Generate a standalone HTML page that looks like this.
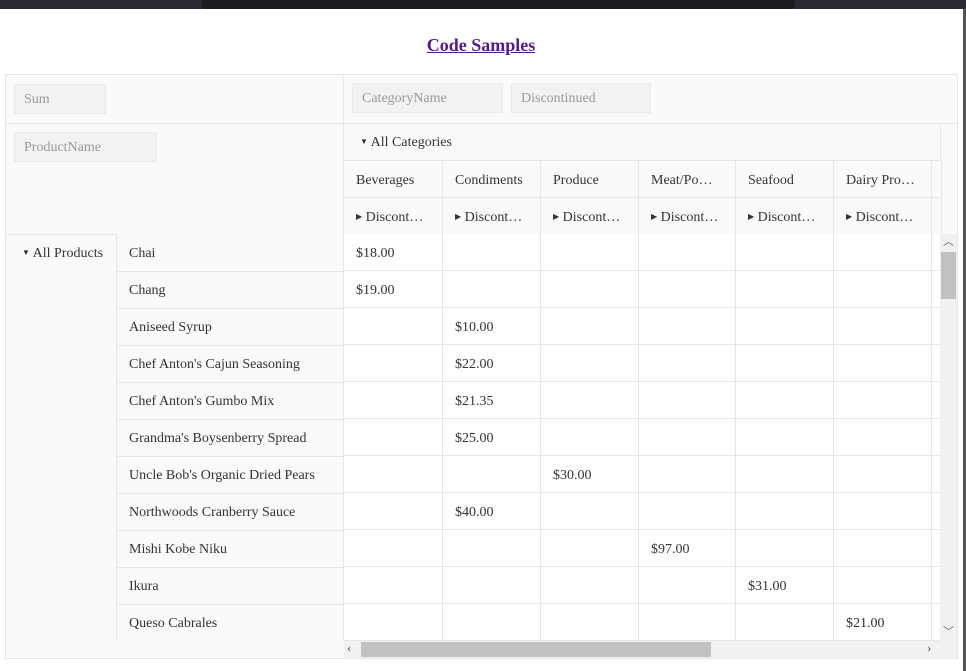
<!DOCTYPE html>
<html><head><meta charset="utf-8"><style>
*{box-sizing:border-box;margin:0;padding:0}
body{width:966px;height:671px;background:#fff;position:relative;overflow:hidden;font-family:"Liberation Serif",serif;font-size:14px;color:#333}
.a{position:absolute}
.top{left:0;top:0;width:966px;height:9px;background:#2b2a33}
.addr{left:202px;top:0;width:593px;height:9px;background:#1c1b22;border-radius:0 0 4px 4px}
.rb{left:963px;top:9px;width:3px;height:662px;background:#555}
h1{position:absolute;left:0;width:962px;top:35px;text-align:center;font-size:18px;font-weight:bold;color:#551a8b;text-decoration:underline}
.chip{position:absolute;height:30px;background:#f2f2f2;border:1px solid #eaeaea;color:#999;font-size:14px;line-height:30px;padding-left:9px}
.bdr{position:absolute;background:#e6e6e6}
table{border-collapse:collapse;position:absolute;table-layout:fixed}
td{border:1px solid #e6e6e6;height:37px;padding:3px 16px 0 12px;white-space:nowrap;overflow:hidden;text-overflow:ellipsis;font-size:14px}
.tri{font-size:8px;vertical-align:2px}
</style></head><body>
<div class="a top"></div><div class="a addr"></div><div class="a rb"></div>
<h1>Code Samples</h1>
<div class="a" style="left:5px;top:74px;width:953px;height:585px;border:1px solid #e6e6e6;background:#fafafa"></div>
<div class="bdr" style="left:5px;top:123px;width:952px;height:1px"></div>
<div class="bdr" style="left:343px;top:74px;width:1px;height:567px"></div>
<div class="chip" style="left:14px;top:84px;width:92px">Sum</div>
<div class="chip" style="left:352px;top:83px;width:151px">CategoryName</div>
<div class="chip" style="left:511px;top:83px;width:140px">Discontinued</div>
<div class="chip" style="left:14px;top:132px;width:143px">ProductName</div>
<div class="a" style="left:360px;top:135px;font-size:14px"><span class="tri">▼</span> All Categories</div>
<div class="bdr" style="left:940px;top:123px;width:1px;height:111px"></div>
<table style="left:343px;top:160px;width:598px;background:#fafafa">
<colgroup><col style="width:99px"><col style="width:98px"><col style="width:98px"><col style="width:97px"><col style="width:98px"><col style="width:98px"><col style="width:10px"></colgroup>
<tr><td>Beverages</td><td>Condiments</td><td>Produce</td><td>Meat/Poultry</td><td>Seafood</td><td>Dairy Products</td><td style="padding:0"></td></tr>
<tr><td><span class="tri">▶</span> Discontinued</td><td><span class="tri">▶</span> Discontinued</td><td><span class="tri">▶</span> Discontinued</td><td><span class="tri">▶</span> Discontinued</td><td><span class="tri">▶</span> Discontinued</td><td><span class="tri">▶</span> Discontinued</td><td style="padding:0"></td></tr>
</table>
<div class="a" style="left:22px;top:246px"><span class="tri">▼</span> All Products</div>
<div class="bdr" style="left:116px;top:234px;width:1px;height:407px"></div>
<div class="bdr" style="left:5px;top:234px;width:338px;height:1px"></div>
<table style="left:116px;top:234px;width:228px;background:#fafafa">
<tr><td style="border-top:0">Chai</td></tr><tr><td>Chang</td></tr><tr><td>Aniseed Syrup</td></tr><tr><td>Chef Anton's Cajun Seasoning</td></tr><tr><td>Chef Anton's Gumbo Mix</td></tr><tr><td>Grandma's Boysenberry Spread</td></tr><tr><td>Uncle Bob's Organic Dried Pears</td></tr><tr><td>Northwoods Cranberry Sauce</td></tr><tr><td>Mishi Kobe Niku</td></tr><tr><td>Ikura</td></tr><tr><td style="border-bottom:0">Queso Cabrales</td></tr>
</table>
<div class="a" style="left:344px;top:234px;width:596px;height:407px;overflow:hidden;background:#fff">
<table style="left:-1px;top:-1px;width:598px">
<colgroup><col style="width:99px"><col style="width:98px"><col style="width:98px"><col style="width:97px"><col style="width:98px"><col style="width:98px"><col style="width:10px"></colgroup>
<tr><td>$18.00</td><td></td><td></td><td></td><td></td><td></td><td></td></tr>
<tr><td>$19.00</td><td></td><td></td><td></td><td></td><td></td><td></td></tr>
<tr><td></td><td>$10.00</td><td></td><td></td><td></td><td></td><td></td></tr>
<tr><td></td><td>$22.00</td><td></td><td></td><td></td><td></td><td></td></tr>
<tr><td></td><td>$21.35</td><td></td><td></td><td></td><td></td><td></td></tr>
<tr><td></td><td>$25.00</td><td></td><td></td><td></td><td></td><td></td></tr>
<tr><td></td><td></td><td>$30.00</td><td></td><td></td><td></td><td></td></tr>
<tr><td></td><td>$40.00</td><td></td><td></td><td></td><td></td><td></td></tr>
<tr><td></td><td></td><td></td><td>$97.00</td><td></td><td></td><td></td></tr>
<tr><td></td><td></td><td></td><td></td><td>$31.00</td><td></td><td></td></tr>
<tr><td></td><td></td><td></td><td></td><td></td><td>$21.00</td><td></td></tr>
</table></div>
<div class="a" style="left:940px;top:234px;width:17px;height:407px;background:#f1f1f1"></div>
<div class="a" style="left:941px;top:252px;width:15px;height:47px;background:#c1c1c1"></div>
<div class="a" style="left:943px;top:233px;font-size:11px;color:#666">︿</div>
<div class="a" style="left:943px;top:623px;font-size:11px;color:#666">﹀</div>
<div class="a" style="left:344px;top:641px;width:613px;height:17px;background:#f1f1f1"></div>
<div class="a" style="left:361px;top:642px;width:350px;height:15px;background:#c1c1c1"></div>
<div class="a" style="left:347px;top:640px;font-size:13px;color:#555">‹</div>
<div class="a" style="left:927px;top:640px;font-size:13px;color:#555">›</div>
</body></html>
